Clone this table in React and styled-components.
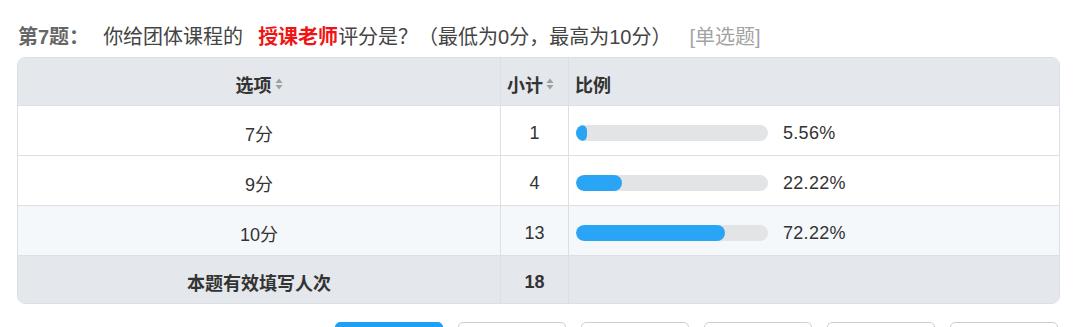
import React from "react";
import styled, { createGlobalStyle } from "styled-components";

const Global = createGlobalStyle`
  html, body { margin: 0; padding: 0; background: #fff; }
  body { font-family: "Liberation Sans", "Noto Sans CJK SC", sans-serif; color: #333; overflow: hidden; }
`;

const Page = styled.div`
  padding: 22px 20px 0 17px;
  width: 1080px;
  box-sizing: border-box;
`;

const Title = styled.div`
  display: flex;
  align-items: center;
  height: 30px;
  font-size: 20px;
  line-height: 30px;
  margin-bottom: 5px;
  padding-left: 1px;
  white-space: nowrap;
`;

const Num = styled.span`
  font-weight: bold;
  color: #666;
  margin-right: 14px;
`;

const Plain = styled.span`
  color: #444;
`;

const Red = styled.span`
  color: #f01414;
  font-weight: bold;
  margin-left: 15px;
`;

const Kind = styled.span`
  color: #a3a3a3;
  margin-left: 18px;
`;

const Table = styled.div`
  border: 1px solid #dcdfe3;
  border-radius: 8px;
  overflow: hidden;
  box-sizing: border-box;
  width: 1043px;
`;

const Row = styled.div`
  display: grid;
  grid-template-columns: 482px 68px 1fr;
  height: ${(p) => p.$h}px;
  background: ${(p) => p.$bg || "#fff"};
  font-weight: ${(p) => (p.$bold ? "bold" : "normal")};
  & + & { border-top: 1px solid #dcdfe3; }
  box-sizing: border-box;
`;

const Cell = styled.div`
  display: flex;
  align-items: center;
  justify-content: ${(p) => p.$align || "center"};
  padding-left: ${(p) => p.$pl || 0}px;
  padding-top: 5px;
  font-size: 18px;
  color: #333;
  box-sizing: border-box;
  & + & { border-left: 1px solid #dcdfe3; }
`;

const SortIcon = styled.svg`
  margin-left: 3px;
  flex: none;
`;

const Sort = () => (
  <SortIcon width="8" height="14" viewBox="0 0 8 14">
    <path d="M4 1.5 L7.5 6 L0.5 6 Z" fill="#a0a0a0" />
    <path d="M4 12.5 L7.5 8 L0.5 8 Z" fill="#a0a0a0" />
  </SortIcon>
);

const Track = styled.div`
  width: 192px;
  height: 16px;
  border-radius: 8px;
  background: #e3e4e6;
  overflow: hidden;
  flex: none;
  margin-left: 7px;
`;

const Fill = styled.div`
  height: 100%;
  border-radius: 8px;
  background: #2aa5f5;
`;

const Pct = styled.span`
  margin-left: 15px;
  font-size: 18px;
  color: #333;
  letter-spacing: 0.3px;
`;

const Buttons = styled.div`
  display: flex;
  justify-content: flex-end;
  gap: 15px;
  margin-top: 18px;
  padding-right: 2px;
`;

const Btn = styled.div`
  width: 108px;
  height: 34px;
  box-sizing: border-box;
  border-radius: 5px;
  border: 1px solid ${(p) => (p.$primary ? "#1ea1f4" : "#cfcfcf")};
  background: ${(p) => (p.$primary ? "#1ea1f4" : "#fff")};
`;

const data = [
  { label: "7分", count: 1, pct: 5.56 },
  { label: "9分", count: 4, pct: 22.22 },
  { label: "10分", count: 13, pct: 72.22, bg: "#f5f8fb" },
];

export default function App() {
  return (
    <Page>
      <Global />
      <Title>
        <Num>第7题：</Num>
        <Plain>你给团体课程的</Plain>
        <Red>授课老师</Red>
        <Plain>评分是？（最低为0分，最高为10分）</Plain>
        <Kind>[单选题]</Kind>
      </Title>
      <Table>
        <Row $h={47} $bg="#e4e7eb" $bold>
          <Cell>
            选项
            <Sort />
          </Cell>
          <Cell $align="flex-start" $pl={6}>
            小计
            <Sort />
          </Cell>
          <Cell $align="flex-start" $pl={6}>
            比例
          </Cell>
        </Row>
        {data.map((d) => (
          <Row key={d.label} $h={50} $bg={d.bg}>
            <Cell>{d.label}</Cell>
            <Cell>{d.count}</Cell>
            <Cell $align="flex-start">
              <Track>
                <Fill style={{ width: `${d.pct * 2.063}px` }} />
              </Track>
              <Pct>{d.pct.toFixed(2)}%</Pct>
            </Cell>
          </Row>
        ))}
        <Row $h={48} $bg="#e4e7eb" $bold>
          <Cell>本题有效填写人次</Cell>
          <Cell>18</Cell>
          <Cell />
        </Row>
      </Table>
      <Buttons>
        <Btn $primary />
        <Btn />
        <Btn />
        <Btn />
        <Btn />
        <Btn />
      </Buttons>
    </Page>
  );
}
